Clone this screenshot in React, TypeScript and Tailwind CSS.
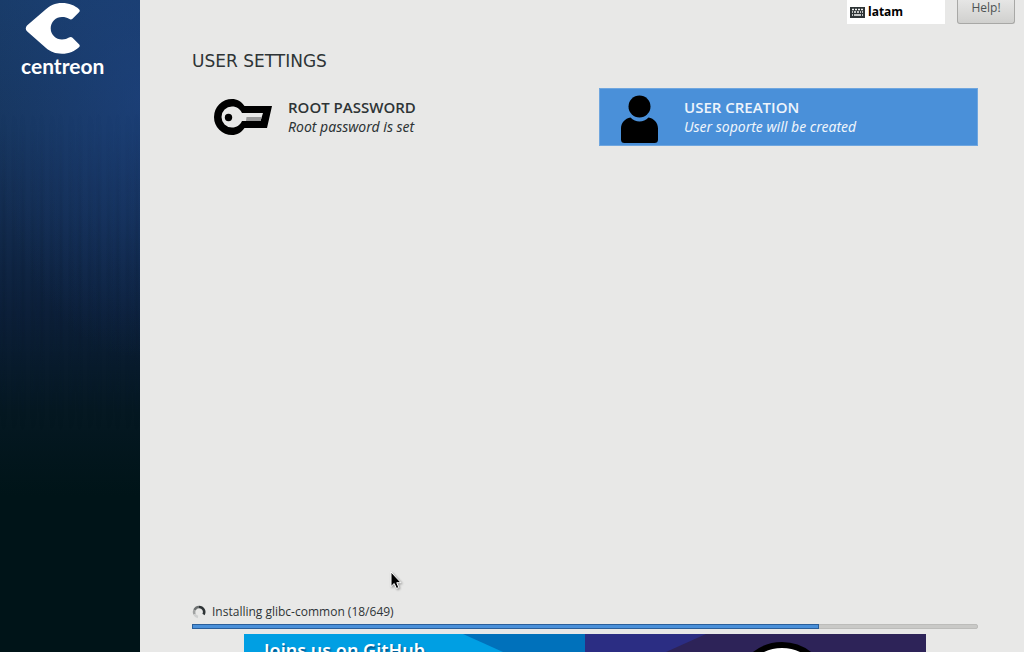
import React from 'react';

interface SpokeProps {
  title: string;
  status: string;
  icon: React.ReactNode;
  selected?: boolean;
}

const CentreonLogo = () => (
  <svg className="h-13 w-14" viewBox="0 0 56 52" fill="#fff" aria-hidden="true">
    <path d="M2 23.500 L20 8 C25 3.500 30 1 37 1 C44 1 50 3.500 54 7.200 Q55.500 8.700 54 10.200 L47.500 16.800 Q46 18 44 16.800 C42 15.500 40 15 37 15 A11.300 11.300 0 0 0 37 37.600 C40 37.600 42 36.800 44 35.600 Q46 34.500 47.500 35.800 L54 42.200 Q55.500 43.700 54 45.200 C50 49 44 51.700 37 51.700 C30 51.700 26 50 21 46 L2 29.200 Q-0.500 26.500 2 23.500 Z" />
  </svg>
);

const KeyIcon = () => (
  <svg className="h-10 w-[59px]" viewBox="0 0 59 40" aria-hidden="true">
    <path
      fillRule="evenodd"
      d="M18 0 C23 0 27.500 2.500 30.500 7 L58 7 L53 29 L30.500 29 C27.500 33.500 23 36 18 36 A18 18 0 0 1 18 0 Z M18 7.500 A10.500 10.500 0 1 0 18 28.500 C23 28.500 26 26 28 22 L46.500 22 L49 14 L28 14 C26 10 23 7.500 18 7.500 Z"
    />
    <circle cx="14.500" cy="18.500" r="3.700" />
    <path d="M32.500 18 H47.800 L46.500 22 H32 Z" fill="#999" />
  </svg>
);

const UserIcon = () => (
  <svg className="h-12 w-[37px]" viewBox="0 0 37 48" aria-hidden="true">
    <circle cx="18.500" cy="11.500" r="11" />
    <path d="M9.500 22.500 C14.500 27.800 22.500 27.800 27.500 22.500 C33 23.500 37 28 37 33.500 V44.500 Q37 48 33.500 48 H3.500 Q0 48 0 44.500 V33.500 C0 28 4 23.500 9.500 22.500 Z" />
  </svg>
);

const KeyboardIcon = () => (
  <svg className="h-[11px] w-[15px]" viewBox="0 0 15 11" aria-hidden="true">
    <rect width="15" height="11" fill="#2e3436" />
    <path
      d="M2 2.500 H4 M5 2.500 H7 M8 2.500 H10 M11 2.500 H13 M2 5 H3 M4 5 H6 M7 5 H9 M10 5 H11 M12 5 H13 M2 8 H3 M4 8 H11 M12 8 H13"
      stroke="#f4f4f4"
      strokeWidth="1.500"
    />
  </svg>
);

const Spinner = () => (
  <svg className="size-[14px]" viewBox="0 0 14 14" fill="none" strokeWidth="2.600" aria-hidden="true">
    <path d="M7 2 A5 5 0 0 1 11.500 9.500" stroke="#2e3436" />
    <path d="M7 2 A5 5 0 0 0 2.500 5" stroke="#6b6f70" />
    <path d="M2.500 5 A5 5 0 0 0 2.500 9.200" stroke="#a0a2a2" />
    <path d="M2.500 9.200 A5 5 0 0 0 6 12" stroke="#cfd0d0" />
  </svg>
);

const Pointer = () => (
  <svg
    className="absolute left-[390px] top-[571px] h-5 w-3 drop-shadow-[1px_1px_1px_#00000066]"
    viewBox="0 0 12 20"
    aria-hidden="true"
  >
    <path d="M1 1 V15.500 L4.200 12.500 L6.500 17.500 L8.800 16.500 L6.800 11.700 H11 Z" fill="#000" stroke="#fff" strokeWidth="1" />
  </svg>
);

const Spoke: React.FC<SpokeProps> = ({ title, status, icon, selected = false }) => (
  <button
    type="button"
    className={
      selected
        ? 'flex h-[58px] items-center border border-[#6fa6df] bg-[#4a90d9] text-left text-[#eef4fb]'
        : 'flex h-[58px] items-center border border-transparent text-left text-[#2e3436]'
    }
  >
    <span className="flex w-[78px] shrink-0 justify-center pt-1">{icon}</span>
    <span className="flex flex-col pl-1.5 leading-[19px]">
      <span className="font-['Open_Sans',sans-serif] text-[15px] leading-[19px] font-semibold">{title}</span>
      <span className="text-[14px] leading-[19px] italic">{status}</span>
    </span>
  </button>
);

export default function App() {
  const progress = 80;

  return (
    <div className="flex h-screen overflow-hidden bg-[#e8e8e7] font-['Noto_Sans',sans-serif] text-[#2e3436]">
      <aside className="relative w-[140px] shrink-0 bg-[linear-gradient(180deg,#193c6a_0%,#17365f_20%,#132c50_33%,#0c1f39_48%,#051822_63%,#001418_76%)]">
        <div className="absolute inset-0 bg-[radial-gradient(ellipse_150px_260px_at_100%_15%,#1f468a80,transparent)]" />
        <div className="absolute inset-x-0 top-28 h-80 bg-[repeating-linear-gradient(90deg,transparent_0px,#00102024_4px,transparent_7px,transparent_11px,#0010201a_13px,transparent_19px)] mask-[linear-gradient(180deg,transparent,black_50%,transparent)]" />
        <div className="relative flex flex-col pt-0.5 pl-[21px]">
          <div className="pl-1">
            <CentreonLogo />
          </div>
          <span className="font-['Lato',sans-serif] text-[21px] leading-6 font-bold text-white">centreon</span>
        </div>
      </aside>

      <main className="flex min-w-0 flex-1 flex-col">
        <header className="flex h-6 shrink-0 justify-end gap-3 pr-[9px]">
          <div className="flex w-[98px] items-center gap-[3px] bg-white pl-[3px] text-[12px] font-bold text-black">
            <KeyboardIcon />
            <span className="font-['Open_Sans',sans-serif]">latam</span>
          </div>
          <button
            type="button"
            className="w-[58px] rounded-b-[3px] border border-t-0 border-[#a8a8a6] bg-linear-to-b from-[#e6e6e5] to-[#d0d0ce] pb-2 font-['Open_Sans',sans-serif] text-[12px] leading-4 text-[#4c5253]"
          >
            Help!
          </button>
        </header>

        <section className="flex-1 pr-[46px] pl-[52px] pt-[25px]">
          <h1 className="font-['DejaVu_Sans',sans-serif] text-[17px] leading-6">USER SETTINGS</h1>
          <div className="mt-[15px] ml-[11px] grid grid-cols-2 gap-[17px]">
            <Spoke title="ROOT PASSWORD" status="Root password is set" icon={<KeyIcon />} />
            <Spoke title="USER CREATION" status="User soporte will be created" icon={<UserIcon />} selected />
          </div>
        </section>

        <footer className="shrink-0 pr-[46px] pl-[52px]">
          <div className="flex items-center gap-1.5 font-['Open_Sans',sans-serif] text-[12px] leading-4">
            <Spinner />
            <span id="install-status">Installing glibc-common (18/649)</span>
          </div>
          <div
            role="progressbar"
            aria-labelledby="install-status"
            aria-valuenow={progress}
            className="mt-1 h-[5px] rounded-xs border border-[#bcbcba] bg-[#c9c9c7]"
          >
            <div className="-mx-px -my-px h-[5px] border border-[#2a5f9b] bg-[#4a90d9]" style={{ width: `${progress}%` }} />
          </div>
          <div className="mx-[52px] mt-[5px] grid h-[18px] grid-cols-2 overflow-hidden">
            <div className="relative bg-[#009fe3]">
              <svg className="absolute inset-y-0 right-0 h-[18px] w-[122px]" viewBox="0 0 122 18" aria-hidden="true">
                <path d="M0 0 H122 V18 H40 Z" fill="#0071bb" />
              </svg>
              <p className="relative pt-1 pl-5 text-[18px] leading-6 font-semibold text-white [text-shadow:1px_2px_2px_#00467a]">
                Joins us on GitHub
              </p>
            </div>
            <div className="relative bg-[#2b2d83]">
              <svg className="absolute inset-y-0 right-0 h-[18px] w-[260px]" viewBox="0 0 260 18" aria-hidden="true">
                <path d="M40 0 H260 V18 H0 Z" fill="#2d2358" />
                <circle cx="116" cy="55" r="44" fill="#fff" stroke="#000" strokeWidth="6" />
              </svg>
            </div>
          </div>
        </footer>
      </main>
      <Pointer />
    </div>
  );
}
